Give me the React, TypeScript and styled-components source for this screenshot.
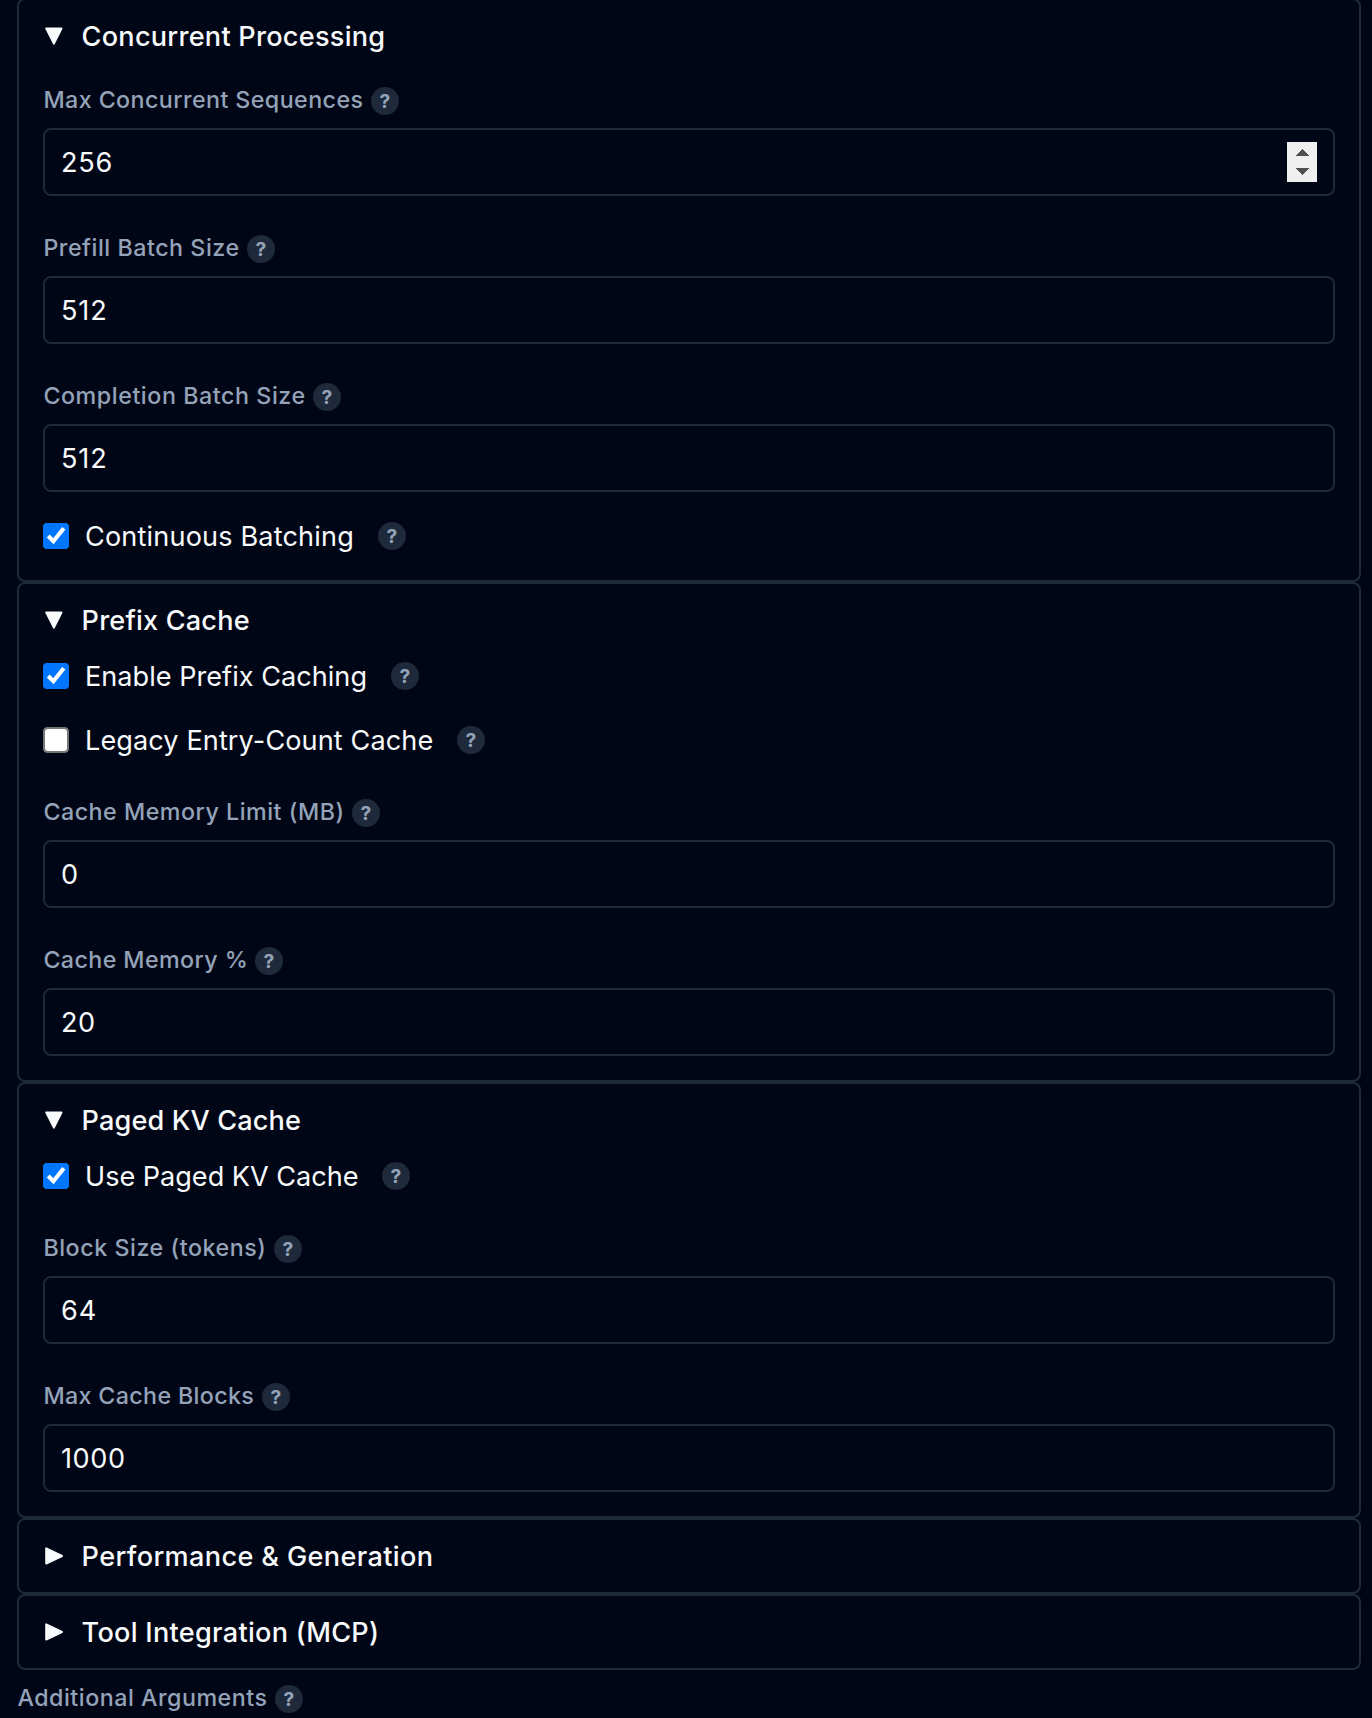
import React, { useState } from 'react';
import styled, { createGlobalStyle } from 'styled-components';

const GlobalStyle = createGlobalStyle`
  *, *::before, *::after { box-sizing: border-box; }
  html, body { margin: 0; background: #010617; }
  body {
    color: #f8fafc;
    font-family: Inter, "Liberation Sans", sans-serif;
    font-size: 27.1px;
    line-height: 40px;
    height: 1718px;
    overflow: hidden;
    -webkit-font-smoothing: antialiased;
  }
`;

const Page = styled.main`
  display: flex;
  flex-direction: column;
  width: 1344px;
  margin: -2px 0 0 17px;
`;

const Panel = styled.section`
  border: 2px solid #1e293b;
  border-radius: 8px;
`;

const PanelHeader = styled.header`
  display: flex;
  align-items: center;
  height: 72px;
  padding: 0 24px;
  cursor: pointer;
`;

const Marker = styled.svg`
  flex: none;
  width: 18px;
  height: 18px;
  margin: 0 18.6px 0 2px;
  fill: #f8fafc;
  stroke: #f8fafc;
  stroke-width: 2;
  stroke-linejoin: round;
`;

const Title = styled.h2<{ $tracking: number }>`
  margin: 0;
  padding-top: 2px;
  font-size: inherit;
  font-weight: 480;
  white-space: nowrap;
  letter-spacing: ${(p) => p.$tracking}px;
`;

const PanelBody = styled.div`
  display: flex;
  flex-direction: column;
  gap: 24px;
  padding: 0 24px 24px;
`;

const FieldBox = styled.div`
  padding-top: 15px;
`;

const LabelRow = styled.div`
  display: flex;
  align-items: center;
  gap: 8px;
  height: 28px;
  margin-bottom: 13px;
`;

const LabelText = styled.label<{ $width: number; $tracking: number }>`
  width: ${(p) => p.$width}px;
  padding: 0 0 2px 0.4px;
  color: #94a3b8;
  font-size: 23.25px;
  font-weight: 460;
  line-height: 28px;
  white-space: nowrap;
  letter-spacing: ${(p) => p.$tracking}px;
`;

const HelpBadge = styled.span`
  display: inline-flex;
  align-items: center;
  justify-content: center;
  flex: none;
  width: 28px;
  height: 28px;
  border-radius: 50%;
  background: #1e293b;
  color: #94a3b8;
  font-size: 19.3px;
  font-weight: 700;
  line-height: 28px;
  cursor: help;
`;

const InputFrame = styled.div`
  display: flex;
  align-items: center;
  height: 68px;
  padding: 0 16px;
  border: 2px solid #1e293b;
  border-radius: 8px;
`;

const ValueInput = styled.input<{ $tracking: number }>`
  flex: 1;
  min-width: 0;
  height: 40px;
  padding: 2px 0 0;
  border: 0;
  outline: 0;
  background: transparent;
  color: #f8fafc;
  font: inherit;
  letter-spacing: ${(p) => p.$tracking}px;
`;

const Spinner = styled.svg`
  flex: none;
  width: 30px;
  height: 40px;
  background: #efefef;
  fill: #505050;
`;

const CheckRow = styled.div`
  display: flex;
  align-items: center;
  height: 40px;
`;

const Checkbox = styled.input`
  zoom: 2;
  flex: none;
  width: 13px;
  height: 13px;
  margin: 0 8px 0 0;
`;

const CheckText = styled.span<{ $width: number; $tracking: number }>`
  width: ${(p) => p.$width}px;
  margin-right: 24px;
  padding-top: 2px;
  white-space: nowrap;
  letter-spacing: ${(p) => p.$tracking}px;
`;

const Footer = styled.div`
  padding-top: 15px;
`;

type LabelProps = { text: string; width: number; tracking: number };

function Label({ text, width, tracking }: LabelProps) {
  return (
    <LabelRow>
      <LabelText $width={width} $tracking={tracking}>{text}</LabelText>
      <HelpBadge>?</HelpBadge>
    </LabelRow>
  );
}

function Field({ value, valueTracking, spinner, ...label }: LabelProps & {
  value: string;
  valueTracking: number;
  spinner?: boolean;
}) {
  return (
    <FieldBox>
      <Label {...label} />
      <InputFrame>
        <ValueInput aria-label={label.text} defaultValue={value} $tracking={valueTracking} />
        {spinner && (
          <Spinner viewBox="0 0 30 40" shapeRendering="crispEdges">
            <path d="M8 14 15 7 22 14Z" />
            <path d="M8 26 15 33 22 26Z" />
          </Spinner>
        )}
      </InputFrame>
    </FieldBox>
  );
}

function Check({ text, width, tracking, checked }: LabelProps & { checked?: boolean }) {
  return (
    <CheckRow>
      <Checkbox type="checkbox" aria-label={text} defaultChecked={checked} />
      <CheckText $width={width} $tracking={tracking}>{text}</CheckText>
      <HelpBadge>?</HelpBadge>
    </CheckRow>
  );
}

function Section({ title, tracking, initiallyOpen, children }: {
  title: string;
  tracking: number;
  initiallyOpen?: boolean;
  children?: React.ReactNode;
}) {
  const [open, setOpen] = useState(!!initiallyOpen);
  return (
    <Panel>
      <PanelHeader onClick={() => setOpen(!open)}>
        <Marker viewBox="0 0 18 18">
          <path d={open ? 'M1.3 1.5H16.5L8.9 16.6Z' : 'M1.2 1.4V16.6L17 9Z'} />
        </Marker>
        <Title $tracking={tracking}>{title}</Title>
      </PanelHeader>
      {open && children && <PanelBody>{children}</PanelBody>}
    </Panel>
  );
}

export default function App() {
  return (
    <>
      <GlobalStyle />
      <Page>
        <Section title="Concurrent Processing" tracking={0.26} initiallyOpen>
          <Field text="Max Concurrent Sequences" width={320} tracking={0.42} value="256" valueTracking={0.7} spinner />
          <Field text="Prefill Batch Size" width={196} tracking={0.53} value="512" valueTracking={0.9} />
          <Field text="Completion Batch Size" width={262} tracking={0.56} value="512" valueTracking={0.9} />
          <Check text="Continuous Batching" width={269} tracking={0.161} checked />
        </Section>
        <Section title="Prefix Cache" tracking={0.19} initiallyOpen>
          <Check text="Enable Prefix Caching" width={282} tracking={0.02} checked />
          <Check text="Legacy Entry-Count Cache" width={348} tracking={0.096} />
          <Field text="Cache Memory Limit (MB)" width={301} tracking={0.51} value="0" valueTracking={0} />
          <Field text="Cache Memory %" width={204} tracking={0.41} value="20" valueTracking={0.4} />
        </Section>
        <Section title="Paged KV Cache" tracking={0.14} initiallyOpen>
          <Check text="Use Paged KV Cache" width={273} tracking={-0.02} checked />
          <Field text="Block Size (tokens)" width={223} tracking={0.55} value="64" valueTracking={1} />
          <Field text="Max Cache Blocks" width={211} tracking={0.35} value="1000" valueTracking={0.6} />
        </Section>
        <Section title="Performance &amp; Generation" tracking={0.36} />
        <Section title="Tool Integration (MCP)" tracking={0.28} />
        <Footer>
          <Label text="Additional Arguments" width={250} tracking={0.51} />
        </Footer>
      </Page>
    </>
  );
}
